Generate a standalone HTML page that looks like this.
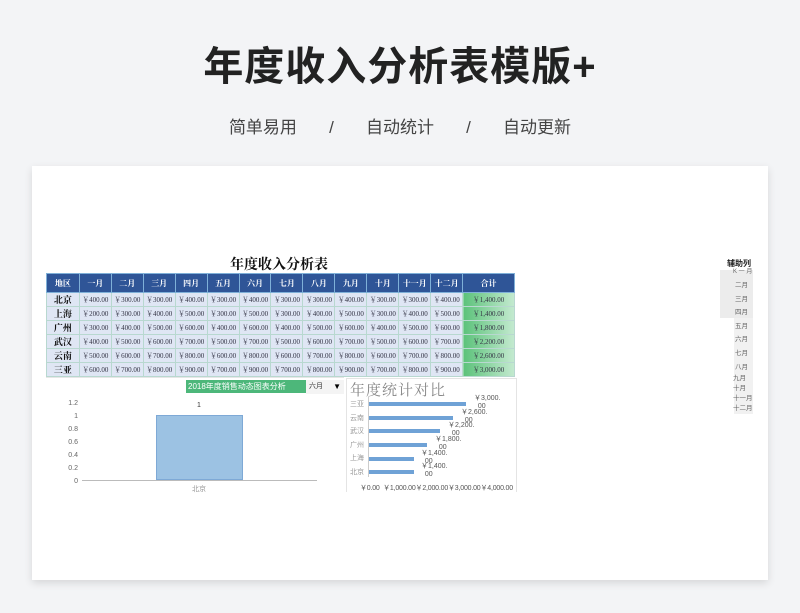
<!DOCTYPE html>
<html><head><meta charset="utf-8"><style>
*{margin:0;padding:0;box-sizing:border-box}
body{width:800px;height:613px;background:#f3f4f6;font-family:"Liberation Sans","Noto Sans CJK SC",sans-serif;position:relative;overflow:hidden}
.a{position:absolute}
.t{left:0;width:800px;text-align:center}
table{border-collapse:collapse;position:absolute;left:46px;top:273px;width:469px;font-family:"Liberation Serif","Noto Serif CJK SC",serif}
td{height:13.5px;font-size:7px;color:#334;text-align:center;border:1px solid #b8d8d0;background:#dfe6f4;white-space:nowrap;padding:0}
tr.h td{height:19px;background:#2f5597;color:#fff;font-weight:bold;font-size:8px;border-color:#7fb0d8}
td.r{font-weight:bold;font-size:9px;color:#111}
td.s{background:linear-gradient(90deg,#5cc27a,#c4ead0);}
.lab{font-size:7px;color:#666;font-family:"Liberation Sans","Noto Sans CJK SC",sans-serif}
</style></head><body>
<div class="a t" style="top:34px;font-size:40px;font-weight:bold;color:#222;letter-spacing:1px">年度收入分析表模版+</div>
<div class="a t" style="top:113px;font-size:17px;color:#444;word-spacing:6px">简单易用 &nbsp;&nbsp;/&nbsp;&nbsp; 自动统计 &nbsp;&nbsp;/&nbsp;&nbsp; 自动更新</div>
<div class="a" style="left:32px;top:166px;width:736px;height:414px;background:#fff;box-shadow:0 3px 8px rgba(0,0,0,.12)"></div>
<div class="a" style="left:230px;top:254px;font-size:14px;font-weight:bold;color:#111;font-family:'Liberation Serif','Noto Serif CJK SC',serif">年度收入分析表</div>
<table>
<colgroup><col style="width:33px"><col span="12" style="width:32px"><col style="width:52px"></colgroup>
<tr class="h"><td>地区</td><td>一月</td><td>二月</td><td>三月</td><td>四月</td><td>五月</td><td>六月</td><td>七月</td><td>八月</td><td>九月</td><td>十月</td><td>十一月</td><td>十二月</td><td>合计</td></tr>
<tr><td class="r">北京</td><td>￥400.00</td><td>￥300.00</td><td>￥300.00</td><td>￥400.00</td><td>￥300.00</td><td>￥400.00</td><td>￥300.00</td><td>￥300.00</td><td>￥400.00</td><td>￥300.00</td><td>￥300.00</td><td>￥400.00</td><td class="s">￥1,400.00</td></tr>
<tr><td class="r">上海</td><td>￥200.00</td><td>￥300.00</td><td>￥400.00</td><td>￥500.00</td><td>￥300.00</td><td>￥500.00</td><td>￥300.00</td><td>￥400.00</td><td>￥500.00</td><td>￥300.00</td><td>￥400.00</td><td>￥500.00</td><td class="s">￥1,400.00</td></tr>
<tr><td class="r">广州</td><td>￥300.00</td><td>￥400.00</td><td>￥500.00</td><td>￥600.00</td><td>￥400.00</td><td>￥600.00</td><td>￥400.00</td><td>￥500.00</td><td>￥600.00</td><td>￥400.00</td><td>￥500.00</td><td>￥600.00</td><td class="s">￥1,800.00</td></tr>
<tr><td class="r">武汉</td><td>￥400.00</td><td>￥500.00</td><td>￥600.00</td><td>￥700.00</td><td>￥500.00</td><td>￥700.00</td><td>￥500.00</td><td>￥600.00</td><td>￥700.00</td><td>￥500.00</td><td>￥600.00</td><td>￥700.00</td><td class="s">￥2,200.00</td></tr>
<tr><td class="r">云南</td><td>￥500.00</td><td>￥600.00</td><td>￥700.00</td><td>￥800.00</td><td>￥600.00</td><td>￥800.00</td><td>￥600.00</td><td>￥700.00</td><td>￥800.00</td><td>￥600.00</td><td>￥700.00</td><td>￥800.00</td><td class="s">￥2,600.00</td></tr>
<tr><td class="r">三亚</td><td>￥600.00</td><td>￥700.00</td><td>￥800.00</td><td>￥900.00</td><td>￥700.00</td><td>￥900.00</td><td>￥700.00</td><td>￥800.00</td><td>￥900.00</td><td>￥700.00</td><td>￥800.00</td><td>￥900.00</td><td class="s">￥3,000.00</td></tr>
</table>
<!-- left chart -->
<div class="a" style="left:46px;top:377px;width:298px;height:1px;background:#e6e6e6"></div>
<div class="a" style="left:186px;top:380px;width:120px;height:13px;background:#4db77a;color:#fff;font-size:8px;line-height:13px;padding-left:2px">2018年度销售动态图表分析</div>
<div class="a" style="left:306px;top:380px;width:38px;height:14px;background:#f4f4f4;font-size:7px;line-height:14px;padding-left:3px;color:#333">六月<span style="position:absolute;right:3px;top:0;font-size:8px;color:#000">▼</span></div>
<div class="a lab" style="left:60px;top:397px;line-height:13px;text-align:right;width:18px">1.2<br>1<br>0.8<br>0.6<br>0.4<br>0.2<br>0</div>
<div class="a" style="left:82px;top:480px;width:235px;height:1px;background:#bbb"></div>
<div class="a" style="left:156px;top:415px;width:87px;height:65px;background:#9cc2e3;border:1px solid #7ea9d6"></div>
<div class="a lab" style="left:197px;top:402px;color:#333">1</div>
<div class="a lab" style="left:192px;top:484px;color:#999">北京</div>
<!-- right chart -->
<div class="a" style="left:346px;top:378px;width:171px;height:114px;border:1px solid #e4e4e4;border-bottom:none"></div>
<div class="a" style="left:350px;top:379px;font-size:15px;color:#888;font-family:'Liberation Serif','Noto Serif CJK SC',serif;letter-spacing:1px">年度统计对比</div>
<div class="a" style="left:368px;top:397px;width:1px;height:80px;background:#ccc"></div>
<div class="a lab" style="left:350px;top:398px;line-height:13.6px;color:#999">三亚<br>云南<br>武汉<br>广州<br>上海<br>北京</div>
<div class="a" style="left:369px;top:402px;width:97px;height:4px;background:#6fa2d6"></div>
<div class="a" style="left:369px;top:416px;width:84px;height:4px;background:#6fa2d6"></div>
<div class="a" style="left:369px;top:429px;width:71px;height:4px;background:#6fa2d6"></div>
<div class="a" style="left:369px;top:443px;width:58px;height:4px;background:#6fa2d6"></div>
<div class="a" style="left:369px;top:457px;width:45px;height:4px;background:#6fa2d6"></div>
<div class="a" style="left:369px;top:470px;width:45px;height:4px;background:#6fa2d6"></div>
<div class="a lab" style="left:474px;top:395px;line-height:8px;color:#555">￥3,000.<br>&nbsp;&nbsp;00</div>
<div class="a lab" style="left:461px;top:409px;line-height:8px;color:#555">￥2,600.<br>&nbsp;&nbsp;00</div>
<div class="a lab" style="left:448px;top:422px;line-height:8px;color:#555">￥2,200.<br>&nbsp;&nbsp;00</div>
<div class="a lab" style="left:435px;top:436px;line-height:8px;color:#555">￥1,800.<br>&nbsp;&nbsp;00</div>
<div class="a lab" style="left:421px;top:450px;line-height:8px;color:#555">￥1,400.<br>&nbsp;&nbsp;00</div>
<div class="a lab" style="left:421px;top:463px;line-height:8px;color:#555">￥1,400.<br>&nbsp;&nbsp;00</div>
<div class="a lab" style="left:360px;top:483px;color:#555;letter-spacing:-0.2px">￥0.00 &nbsp;￥1,000.00￥2,000.00￥3,000.00￥4,000.00</div>
<!-- side helper column -->
<div class="a" style="left:727px;top:258px;font-size:8px;font-weight:bold;color:#222">辅助列</div>
<div class="a" style="left:720px;top:270px;width:33px;height:48px;background:#ececec"></div>
<div class="a" style="left:734px;top:318px;width:19px;height:96px;background:#f1f1f1"></div>
<div class="a lab" style="left:733px;top:266px;font-size:6px;color:#666">K 一 月</div>
<div class="a lab" style="left:735px;top:279px;line-height:13.6px;font-size:6.5px;color:#666">二月<br>三月<br>四月<br>五月<br>六月<br>七月<br>八月</div>
<div class="a lab" style="left:733px;top:374px;line-height:10px;font-size:6.5px;color:#666">九月<br>十月<br>十一月<br>十二月</div>
</body></html>
